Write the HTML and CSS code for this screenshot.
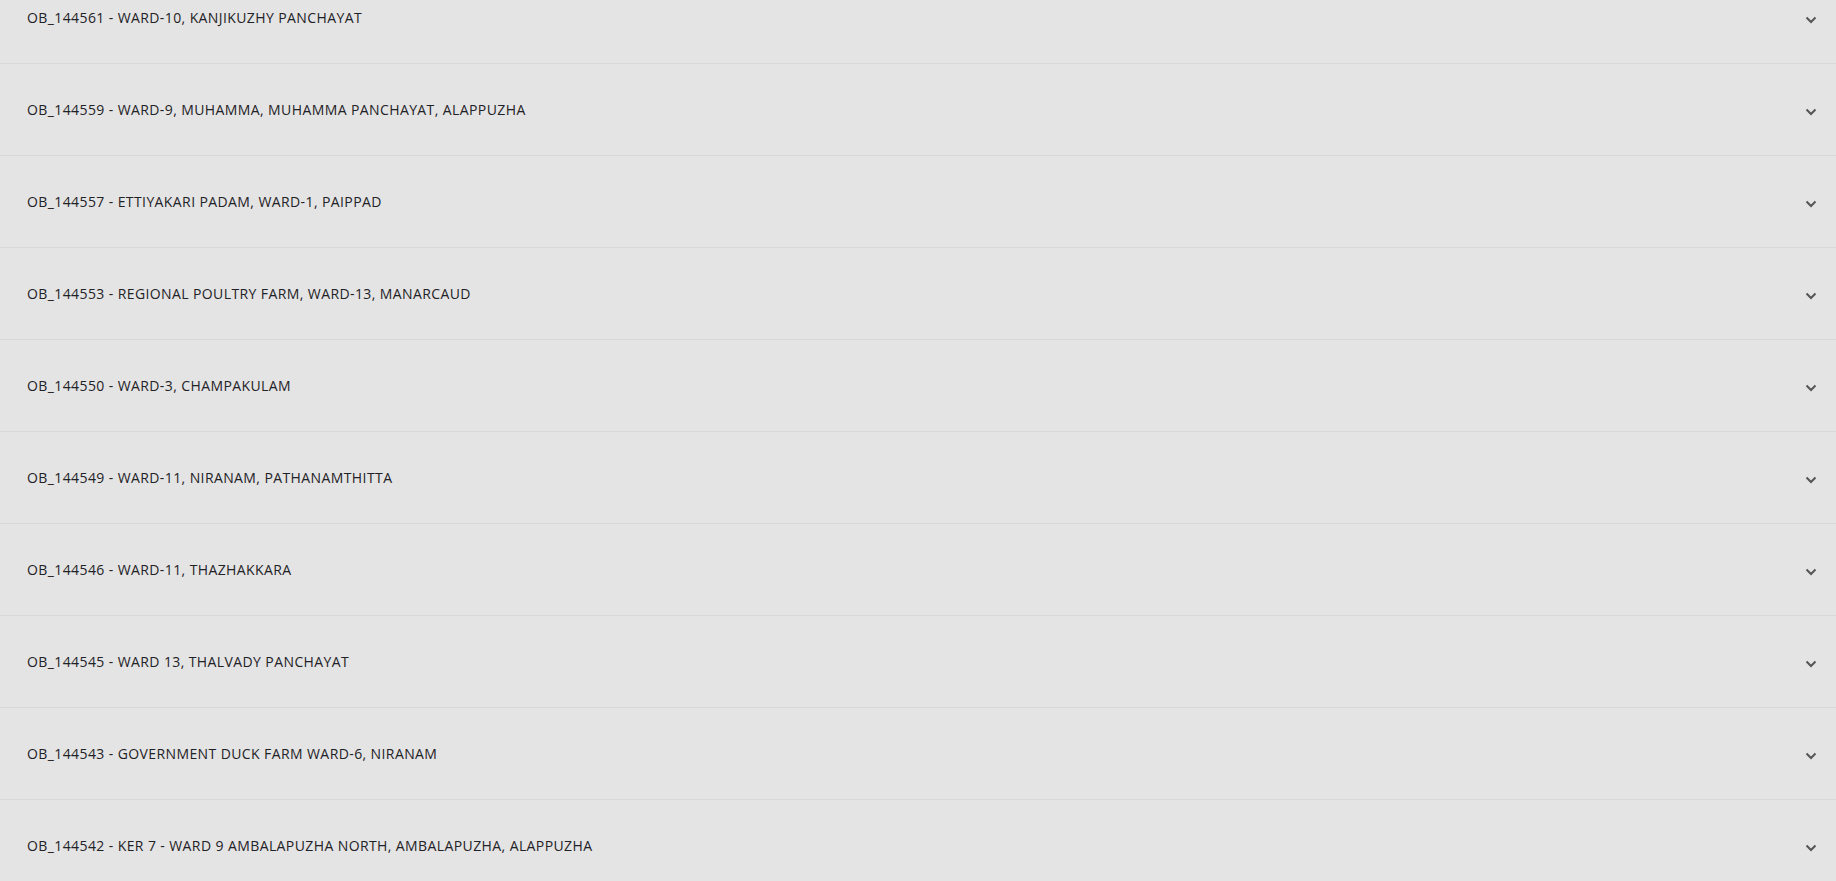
FILE: index.html
```html
<!DOCTYPE html>
<html lang="en">
<head>
<meta charset="utf-8">
<title>Outbreaks</title>
<link rel="stylesheet" href="styles.css">
</head>
<body>
<div class="accordion">
  <div class="item"><button class="head"><span class="title">OB_144561 - WARD-10, KANJIKUZHY PANCHAYAT</span><svg class="chev" viewBox="0 0 12 8"><path d="M1.5 1.5 6 6l4.5-4.5"/></svg></button></div>
  <div class="item"><button class="head"><span class="title">OB_144559 - WARD-9, MUHAMMA, MUHAMMA PANCHAYAT, ALAPPUZHA</span><svg class="chev" viewBox="0 0 12 8"><path d="M1.5 1.5 6 6l4.5-4.5"/></svg></button></div>
  <div class="item"><button class="head"><span class="title">OB_144557 - ETTIYAKARI PADAM, WARD-1, PAIPPAD</span><svg class="chev" viewBox="0 0 12 8"><path d="M1.5 1.5 6 6l4.5-4.5"/></svg></button></div>
  <div class="item"><button class="head"><span class="title">OB_144553 - REGIONAL POULTRY FARM, WARD-13, MANARCAUD</span><svg class="chev" viewBox="0 0 12 8"><path d="M1.5 1.5 6 6l4.5-4.5"/></svg></button></div>
  <div class="item"><button class="head"><span class="title">OB_144550 - WARD-3, CHAMPAKULAM</span><svg class="chev" viewBox="0 0 12 8"><path d="M1.5 1.5 6 6l4.5-4.5"/></svg></button></div>
  <div class="item"><button class="head"><span class="title">OB_144549 - WARD-11, NIRANAM, PATHANAMTHITTA</span><svg class="chev" viewBox="0 0 12 8"><path d="M1.5 1.5 6 6l4.5-4.5"/></svg></button></div>
  <div class="item"><button class="head"><span class="title">OB_144546 - WARD-11, THAZHAKKARA</span><svg class="chev" viewBox="0 0 12 8"><path d="M1.5 1.5 6 6l4.5-4.5"/></svg></button></div>
  <div class="item"><button class="head"><span class="title">OB_144545 - WARD 13, THALVADY PANCHAYAT</span><svg class="chev" viewBox="0 0 12 8"><path d="M1.5 1.5 6 6l4.5-4.5"/></svg></button></div>
  <div class="item"><button class="head"><span class="title">OB_144543 - GOVERNMENT DUCK FARM WARD-6, NIRANAM</span><svg class="chev" viewBox="0 0 12 8"><path d="M1.5 1.5 6 6l4.5-4.5"/></svg></button></div>
  <div class="item"><button class="head"><span class="title">OB_144542 - KER 7 - WARD 9 AMBALAPUZHA NORTH, AMBALAPUZHA, ALAPPUZHA</span><svg class="chev" viewBox="0 0 12 8"><path d="M1.5 1.5 6 6l4.5-4.5"/></svg></button></div>
</div>
</body>
</html>
```
FILE: styles.css
```css
html, body {
  margin: 0;
  padding: 0;
  background: #e4e4e4;
  overflow: hidden;
}
.accordion {
  margin-top: -28px;
  display: flex;
  flex-direction: column;
}
.item {
  border-bottom: 1px solid #d9d9d9;
}
.head {
  display: flex;
  align-items: center;
  justify-content: space-between;
  width: 100%;
  height: 91px;
  padding: 0 19px 0 27px;
  border: 0;
  background: #e4e4e4;
  font-family: "Open Sans", "DejaVu Sans", sans-serif;
  font-size: 14px;
  color: #1f2226;
  text-align: left;
  cursor: pointer;
}
.title {
  letter-spacing: 0.4px;
}
.chev {
  width: 12px;
  height: 8px;
  margin-top: 5px;
  fill: none;
  stroke: #555;
  stroke-width: 2;
}
```
